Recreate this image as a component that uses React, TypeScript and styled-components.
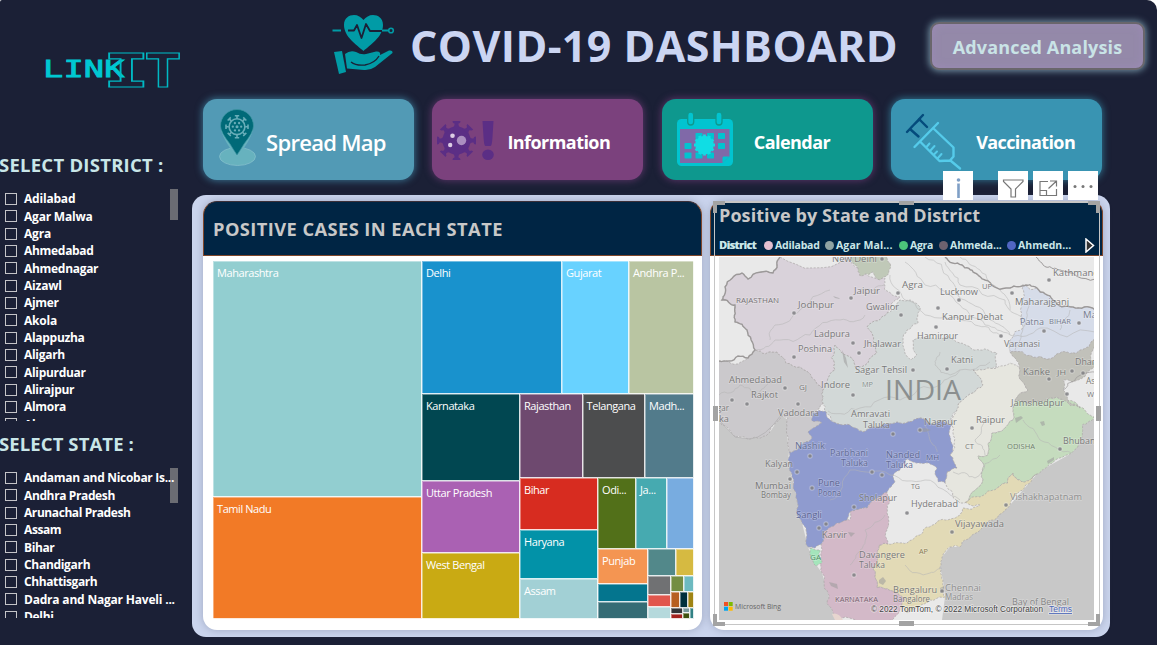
import React from 'react';
import styled, { createGlobalStyle } from 'styled-components';

const Global = createGlobalStyle`
  *, *::before, *::after { box-sizing: border-box; }
  html, body { margin: 0; padding: 0; background: #ffffff; overflow: hidden; }
  body { font-family: "Open Sans", "Noto Sans", sans-serif; }
`;

const Page = styled.div`
  width: 1157px;
  height: 645px;
  display: flex;
  background: #1b2036;
  border-radius: 2px 10px 0 0;
  overflow: hidden;
`;

/* ---------- sidebar ---------- */

const Sidebar = styled.aside`
  width: 192px;
  height: 645px;
  flex: none;
  display: flex;
  flex-direction: column;
  overflow: hidden;
`;

const LogoBox = styled.div`
  height: 153px;
  padding: 48px 0 0 42px;
  flex: none;
`;

const SideTitle = styled.h2<{ $track: number }>`
  margin: 0 0 0 -1px;
  height: 24px;
  flex: none;
  font-size: 18.5px;
  line-height: 24px;
  font-weight: 700;
  color: #c9e6e8;
  white-space: nowrap;
  letter-spacing: ${(p) => p.$track}px;
`;

const SlicerBox = styled.div<{ $top: number; $height: number; $gap: number }>`
  margin-top: ${(p) => p.$top}px;
  margin-bottom: ${(p) => p.$gap}px;
  height: ${(p) => p.$height}px;
  width: 178px;
  flex: none;
  display: flex;
  justify-content: space-between;
  overflow: hidden;
  padding-left: 5px;
`;

const Options = styled.ul`
  position: relative;
  z-index: 1;
  list-style: none;
  margin: 0;
  padding: 1.3px 0 0;
  width: 165px;
  flex: none;
`;

const Option = styled.li`
  display: flex;
  align-items: center;
  gap: 7px;
  height: 17.33px;
  white-space: nowrap;
  font-size: 12px;
  line-height: 17px;
  font-weight: 700;
  color: #ffffff;
`;

const Check = styled.span`
  width: 12px;
  height: 12px;
  flex: none;
  border: 1px solid #c4c4c8;
`;

const OptionText = styled.span<{ $track: number }>`
  letter-spacing: ${(p) => p.$track}px;
`;

const Thumb = styled.div<{ $height: number }>`
  width: 8px;
  flex: none;
  height: ${(p) => p.$height}px;
  background: #6b6c73;
`;

/* ---------- main column ---------- */

const Main = styled.main`
  width: 965px;
  display: flex;
  flex-direction: column;
`;

const Header = styled.header`
  height: 99px;
  display: flex;
  align-items: flex-start;
  padding-left: 138px;
`;

const HeartBox = styled.div`
  width: 80px;
  padding-top: 12px;
  flex: none;
`;

const Title = styled.h1`
  margin: 0;
  padding-top: 17px;
  width: 520px;
  flex: none;
  font-size: 43px;
  line-height: 58px;
  font-weight: 700;
  letter-spacing: 0.4px;
  color: #cbd5f2;
  white-space: nowrap;
`;

const Advanced = styled.button`
  margin: 22px 0 0 0;
  width: 215px;
  height: 48px;
  flex: none;
  padding: 2px 0 0 0;
  border: 2px solid #69666c;
  border-radius: 9px;
  background: #9489a9;
  box-shadow: 0 0 7px 1px rgba(150, 190, 205, 0.75), inset 0 0 8px rgba(160, 140, 190, 0.7);
  font: 700 18px/42px "Open Sans", "Noto Sans", sans-serif;
  letter-spacing: 0.15px;
  color: #c9e3e6;
  white-space: nowrap;
`;

const Nav = styled.nav`
  height: 81px;
  padding-left: 11px;
  display: flex;
  gap: 18.4px;
`;

const NavCard = styled.button<{ $bg: string; $glow: string }>`
  width: 211px;
  height: 81px;
  flex: none;
  display: flex;
  align-items: center;
  margin: 0;
  padding: 0;
  border: 0;
  border-radius: 14px;
  text-align: left;
  background: ${(p) => p.$bg};
  box-shadow: 0 0 7px 1px ${(p) => p.$glow};
`;

const NavIcon = styled.span<{ $width: number }>`
  width: ${(p) => p.$width}px;
  height: 81px;
  flex: none;
  display: block;
`;

const NavLabel = styled.span<{ $size: number; $weight: number; $track: number }>`
  padding-top: 5px;
  font-family: "Open Sans", "Noto Sans", sans-serif;
  font-size: ${(p) => p.$size}px;
  line-height: 28px;
  font-weight: ${(p) => p.$weight};
  letter-spacing: ${(p) => p.$track}px;
  color: #ffffff;
  white-space: nowrap;
`;

const Board = styled.section`
  margin-top: 15px;
  width: 918px;
  height: 442px;
  padding: 6px 7px 7px 11px;
  display: flex;
  gap: 8px;
  border-radius: 14px;
  background: #cbd5ee;
`;

const Panel = styled.article<{ $width: number }>`
  position: relative;
  width: ${(p) => p.$width}px;
  height: 429px;
  flex: none;
  display: flex;
  flex-direction: column;
  border-radius: 14px;
  background: #ffffff;
  box-shadow: 0 0 8px rgba(120, 130, 155, 0.55);
`;

const PanelHead = styled.div`
  height: 55px;
  flex: none;
  padding-left: 9px;
  display: flex;
  align-items: center;
  border: 1px solid #80472b;
  border-top-color: #3b2f38;
  border-radius: 14px 14px 0 0;
  background: #002544;
  color: #c8c8c8;
  font-size: 18.3px;
  font-weight: 700;
  letter-spacing: 0.42px;
  white-space: nowrap;
`;

/* ---------- treemap ---------- */

const TreeBox = styled.div`
  margin: 5px 0 0 10px;
  width: 482px;
  height: 359px;
  display: flex;
`;

const Split = styled.div<{ $dir: 'row' | 'column'; $size: number }>`
  display: flex;
  flex-direction: ${(p) => p.$dir};
  flex: 0 0 ${(p) => p.$size}px;
  min-width: 0;
  min-height: 0;
`;

const Cell = styled.div<{ $size: number; $color: string }>`
  flex: 0 0 ${(p) => p.$size}px;
  min-width: 0;
  min-height: 0;
  overflow: hidden;
  padding: 3px 0 0 4px;
  background: ${(p) => p.$color};
  box-shadow: inset -1px -1px 0 rgba(255, 255, 255, 0.85), inset 1px 1px 0 rgba(255, 255, 255, 0.4);
  font-size: 11px;
  line-height: 18px;
  letter-spacing: -0.42px;
  color: #ffffff;
  white-space: nowrap;
`;

type Leaf = { s: number; c: string; t?: string };
type Branch = { s: number; d: 'row' | 'column'; k: Tree[] };
type Tree = Leaf | Branch;

const tree: Branch = {
  s: 482, d: 'row', k: [
    { s: 209, d: 'column', k: [{ s: 236, c: '#92ced0', t: 'Maharashtra' }, { s: 122, c: '#f27a26', t: 'Tamil Nadu' }] },
    { s: 272, d: 'column', k: [
      { s: 133, d: 'row', k: [{ s: 140, c: '#1992cd', t: 'Delhi' }, { s: 67, c: '#68d2ff', t: 'Gujarat' }, { s: 65, c: '#b9c5a2', t: 'Andhra P...' }] },
      { s: 225, d: 'row', k: [
        { s: 98, d: 'column', k: [{ s: 87, c: '#014751', t: 'Karnataka' }, { s: 72, c: '#aa61b3', t: 'Uttar Pradesh' }, { s: 66, c: '#c9aa13', t: 'West Bengal' }] },
        { s: 174, d: 'column', k: [
          { s: 84, d: 'row', k: [{ s: 62.5, c: '#6e496f', t: 'Rajasthan' }, { s: 62.5, c: '#4c4d4e', t: 'Telangana' }, { s: 49, c: '#527b8b', t: 'Madh...' }] },
          { s: 141, d: 'row', k: [
            { s: 78, d: 'column', k: [{ s: 52, c: '#d72c20', t: 'Bihar' }, { s: 49, c: '#0292a8', t: 'Haryana' }, { s: 40, c: '#a2d0d5', t: 'Assam' }] },
            { s: 96, d: 'column', k: [
              { s: 71, d: 'row', k: [{ s: 38, c: '#527019', t: 'Odi...' }, { s: 31, c: '#46aab0', t: 'Ja...' }, { s: 27, c: '#78ace0' }] },
              { s: 70, d: 'row', k: [
                { s: 50, d: 'column', k: [{ s: 35, c: '#f49552', t: 'Punjab' }, { s: 18, c: '#04758e' }, { s: 17, c: '#356c75' }] },
                { s: 46, d: 'column', k: [
                  { s: 27, d: 'row', k: [{ s: 28, c: '#52888a' }, { s: 18, c: '#d6ba41' }] },
                  { s: 43, d: 'row', k: [
                    { s: 23, d: 'column', k: [{ s: 19, c: '#707173' }, { s: 12, c: '#e1564d' }, { s: 12, c: '#b5d9dc' }] },
                    { s: 23, d: 'column', k: [
                      { s: 16, d: 'row', k: [{ s: 13, c: '#748d42' }, { s: 10, c: '#6dbac0' }] },
                      { s: 16, d: 'row', k: [{ s: 9, c: '#b75f20' }, { s: 8, c: '#00303b' }, { s: 6, c: '#9f8414' }] },
                      { s: 11, d: 'row', k: [
                        { s: 12, d: 'column', k: [{ s: 6, c: '#333538' }, { s: 5, c: '#a2211d' }] },
                        { s: 7, d: 'column', k: [{ s: 5, c: '#77989b' }, { s: 6, c: '#3f5210' }] },
                        { s: 4, c: '#318184' },
                      ] },
                    ] },
                  ] },
                ] },
              ] },
            ] },
          ] },
        ] },
      ] },
    ] },
  ],
};

const TreeNode = ({ n }: { n: Tree }) =>
  'k' in n ? (
    <Split $dir={n.d} $size={n.s}>
      {n.k.map((child, i) => <TreeNode key={i} n={child} />)}
    </Split>
  ) : (
    <Cell $size={n.s} $color={n.c}>{n.t}</Cell>
  );

/* ---------- map panel ---------- */

const MapHead = styled.div`
  height: 55px;
  flex: none;
  padding: 2px 0 0 8px;
  border: 1px solid #80472b;
  border-top-color: #3b2f38;
  border-radius: 12px 12px 0 0;
  background: #002544;
`;

const MapTitle = styled.h3`
  margin: 0;
  height: 22px;
  font-size: 18px;
  line-height: 22px;
  font-weight: 700;
  letter-spacing: 0.08px;
  color: #c8c8c8;
  white-space: nowrap;
`;

const Legend = styled.div`
  display: flex;
  align-items: center;
  height: 18px;
  margin-top: 10px;
  font-size: 10.5px;
  line-height: 18px;
  font-weight: 700;
  color: #cbe7e8;
  white-space: nowrap;
`;

const LegendName = styled.span<{ $width: number; $track: number; $heavy?: boolean }>`
  width: ${(p) => p.$width}px;
  flex: none;
  letter-spacing: ${(p) => p.$track}px;
  text-shadow: ${(p) => (p.$heavy ? '0.6px 0 0 #cbe7e8' : 'none')};
`;

const Dot = styled.i<{ $color: string }>`
  width: 9px;
  height: 9px;
  flex: none;
  margin-right: 2px;
  border-radius: 50%;
  background: ${(p) => p.$color};
`;

const MapBox = styled.div`
  margin: 1px 0 0 9px;
  width: 375px;
  height: 363px;
  line-height: 0;
`;

const Frame = styled.div`
  position: absolute;
  left: 4px;
  top: 0;
  width: 386px;
  height: 424px;
  border: solid #c6c6c6;
  border-width: 2px 1px 1px 1px;
  pointer-events: none;
`;

const Handle = styled.i<{ $x: number; $y: number; $w: number; $h: number; $edge?: string }>`
  position: absolute;
  left: ${(p) => p.$x}px;
  top: ${(p) => p.$y}px;
  width: ${(p) => p.$w}px;
  height: ${(p) => p.$h}px;
  border-style: solid;
  border-color: #a3a3a3;
  border-width: ${(p) => p.$edge ?? '0'};
  background: ${(p) => (p.$edge ? 'transparent' : '#a3a3a3')};
`;

const Tools = styled.div`
  position: absolute;
  left: 233px;
  top: -30px;
  display: flex;
  gap: 5px;
`;

const Tool = styled.span<{ $after?: number }>`
  width: 30px;
  height: 29px;
  margin-right: ${(p) => p.$after ?? 0}px;
  background: #ffffff;
  line-height: 0;
`;

type P = [number, number];

/* fractal edge: the same pair of points always gives the same wiggle */
const rough = (a: P, b: P, depth: number): P[] => {
  const len = Math.hypot(b[0] - a[0], b[1] - a[1]);
  if (depth === 0 || len < 3) return [b];
  const flip = a[0] > b[0] || (a[0] === b[0] && a[1] > b[1]);
  const [p, q] = flip ? [b, a] : [a, b];
  const h = Math.sin(p[0] * 12.98 + p[1] * 78.23 + q[0] * 37.7 + q[1] * 11.3) * 43758.54;
  const k = (h - Math.floor(h) - 0.5) * 0.34;
  const m: P = [(p[0] + q[0]) / 2 - (q[1] - p[1]) * k, (p[1] + q[1]) / 2 + (q[0] - p[0]) * k];
  return [...rough(a, m, depth - 1), ...rough(m, b, depth - 1)];
};

const toPath = (s: string, close = true, depth = 3) => {
  const pts = s.trim().split(/\s+/).map((t) => t.split(',').map(Number) as P);
  let out: P[] = [pts[0]];
  for (let i = 1; i < pts.length; i++) out = out.concat(rough(pts[i - 1], pts[i], depth));
  if (close) out = out.concat(rough(pts[pts.length - 1], pts[0], depth));
  return 'M' + out.map((p) => p[0].toFixed(1) + ' ' + p[1].toFixed(1)).join('L') + (close ? 'Z' : '');
};

const regions: { c: string; p: string }[] = [
  { c: '#cbc9cc', p: '755,350 777,352 800,367 823,390 823,403 813,413 822,423 812,438 797,450 789,452 787,434 788,418 781,416 770,432 750,439 735,437 719,420 719,361 748,358' },
  { c: '#d9d2da', p: '780,257 847,257 860,270 885,278 885,290 900,297 887,313 867,327 876,345 877,353 857,370 850,357 835,345 835,370 823,390 800,367 777,352 755,350 747,330 735,322 735,305 722,300 725,287 742,273 748,279 773,273' },
  { c: '#c0c9b8', p: '850,257 887,257 889,270 880,280 873,272 860,276 857,266' },
  { c: '#d2d8d7', p: '867,327 887,313 900,300 912,301 920,307 918,323 907,330 903,340 906,355 911,360 917,355 913,340 933,338 960,343 980,350 997,353 997,367 973,370 983,385 963,400 957,410 952,424 937,423 920,418 897,422 880,427 863,432 850,425 833,422 825,411 823,403 823,390 835,370 835,345 850,357 857,370 877,353 876,345' },
  { c: '#e6e6df', p: '973,370 997,368 1010,363 1020,370 1028,390 1015,400 1013,408 1013,420 992,433 988,455 978,456 984,466 983,480 968,502 960,503 947,487 945,483 947,472 957,468 950,455 953,433 952,425 957,410 963,400 983,385' },
  { c: '#c5dcbe', p: '1013,408 1015,400 1028,404 1050,398 1063,400 1083,408 1094,417 1082,425 1082,440 1072,453 1047,467 1037,474 1023,482 1013,473 997,488 968,502 983,480 984,466 978,456 988,455 992,433 1013,420' },
  { c: '#c1c1ba', p: '1010,352 1033,357 1060,353 1080,350 1095,339 1095,367 1063,380 1063,390 1080,408 1063,400 1050,398 1028,404 1015,400 1028,390 1020,370' },
  { c: '#d6dce9', p: '1022,285 1037,288 1053,300 1073,307 1095,310 1095,339 1080,350 1060,353 1033,357 1010,352 1010,340 1023,327 1023,300' },
  { c: '#e2dab6', p: '879,545 888,544 907,543 920,535 940,520 960,515 963,508 980,505 965,502 980,497 997,488 1013,473 1023,482 1037,474 1023,490 1010,505 987,522 982,528 962,542 960,547 950,547 942,557 940,567 943,580 945,597 930,600 917,607 907,613 900,605 893,591 877,588 873,567 878,557' },
  { c: '#d3b9c8', p: '823,532 850,520 850,512 867,508 887,492 891,500 887,513 887,530 888,544 879,545 878,557 873,567 877,588 893,591 905,600 900,607 892,620 838,620 833,613 828,593 822,573 820,560 822,543' },
  { c: '#8f9bcf', p: '789,452 797,450 812,438 808,432 822,423 812,421 813,413 825,411 827,417 833,422 850,425 863,432 880,427 897,422 920,418 937,423 952,425 949,433 953,447 950,455 957,468 947,472 945,483 938,482 937,468 920,463 907,459 900,470 893,477 895,482 887,492 867,508 850,512 847,520 837,523 823,532 822,543 815,548 808,547 802,523 797,500 792,477 788,460' },
  { c: '#a4e5bb', p: '810,548 820,550 822,563 816,566 811,557' },
];

const coastWest = 'M719 420L735 437L750 439L770 432L781 415L788 420L787 434L789 452L788 460L792 477L797 500L802 523L808 547L812 557L817 566L822 573L828 593L833 613L838 620L719 620Z';
const coastEast = 'M1095 418L1082 425L1082 440L1072 453L1047 467L1037 474L1023 490L1010 505L987 522L982 528L962 542L960 547L950 547L942 557L940 567L943 580L945 597L942 620L1095 620Z';

const rivers = [
  '905,262 925,285 960,305 985,325 1010,335 1040,328 1095,332',
  '925,257 950,280 965,300 990,320 1010,335',
  '890,275 905,300 940,318 975,325 1000,335',
  '945,262 960,285 1005,300 1023,318',
  '770,340 775,325 800,310 830,290',
  '755,350 775,340 810,335 840,320 865,315',
  '828,411 860,408 900,400 940,385 960,370',
  '830,500 850,470 890,475 925,480 960,500',
  '850,565 860,550 865,530 885,515',
  '905,565 930,573 942,568', '940,352 935,365 950,375 990,362',
  '953,472 975,478 1000,455', '1023,420 1040,440 1072,453', '1015,350 1025,325 1030,300',
  '1060,330 1070,310', '719,395 740,385 757,395 770,380', '960,257 980,270 1000,290 1010,310',
  '925,425 930,440 937,452', '860,290 885,285', '985,420 975,440 985,455',
];

type Label = [string, number, number, number, number, string?];
/* text, x, baseline y, width, size, colour */
const labels: Label[] = [
  ['New Delhi', 832, 262, 45, 9.5],
  ['RAJASTHAN', 736, 303, 43, 8, '#757175'],
  ['Jodhpur', 798, 308, 36, 9.5], ['Jaipur', 854, 294, 26, 9.5], ['Agra', 902, 288, 21, 9.5],
  ['Gwalior', 866, 310, 33, 9.5], ['Ladpura', 814, 337, 36, 9.5], ['Jhalawar', 864, 347, 37, 9.5],
  ['Poshina', 798, 352, 34, 9.5], ['Sagar Tehsil', 855, 373, 52, 9.5], ['Ahmedabad', 729, 383, 53, 9.5],
  ['Rajkot', 751, 398, 27, 9.5], ['GJ', 799, 390, 8, 8], ['Indore', 821, 388, 29, 9.5],
  ['MP', 862, 387, 11, 8, '#868f8f'], ['Vadodara', 778, 416, 41, 9.5], ['gar', 717, 411, 12, 9.5], ['ka', 719, 422, 10, 9.5],
  ['Lucknow', 940, 295, 38, 9.5], ['UP', 982, 289, 10, 8], ['Kathmandu', 1053, 276, 52, 9.5],
  ['Maharajganj', 1015, 305, 54, 9.5], ['Kanpur Dehat', 942, 320, 61, 9.5], ['Patna', 1020, 325, 24, 9.5, '#777d8e'],
  ['BIHAR', 1049, 324, 22, 8, '#777d8e'], ['Malda', 1083, 318, 27, 9.5, '#777d8e'], ['Hamirpur', 917, 339, 41, 9.5],
  ['Varanasi', 1004, 347, 36, 9.5], ['Katni', 951, 363, 22, 9.5], ['Dhanbad', 1075, 365, 38, 9.5],
  ['Kanke', 1023, 375, 27, 9.5], ['JH', 1057, 375, 9, 8], ['Asansol', 1086, 384, 30, 9.5], ['WB', 1087, 397, 12, 8],
  ['Jamshedpur', 1011, 406, 53, 9.5], ['Amravati', 851, 417, 39, 9.5], ['Taluka', 863, 428, 27, 9.5],
  ['Nagpur', 924, 425, 33, 9.5], ['Raipur', 976, 423, 29, 9.5], ['CT', 965, 449, 9, 8],
  ['ODISHA', 1007, 449, 28, 8, '#6f7f6b'], ['Bhubaneswar', 1063, 444, 57, 9.5],
  ['Nashik', 795, 449, 30, 9.5, '#666f92'], ['Kalyan', 765, 467, 28, 9.5], ['Parbhani', 830, 456, 38, 9.5, '#5f6994'],
  ['Taluka', 841, 466, 27, 9.5, '#5f6994'], ['Nanded', 886, 458, 34, 9.5, '#5f6994'], ['Taluka', 886, 468, 27, 9.5, '#5f6994'],
  ['MH', 926, 460, 13, 8, '#596290'], ['Mumbai', 755, 489, 36, 9.5], ['Bombay', 761, 498, 30, 8.5],
  ['Pune', 818, 486, 22, 9.5, '#5b6592'], ['Poona', 818, 496, 23, 8.5, '#5b6592'], ['Sholapur', 859, 501, 38, 9.5],
  ['Sangli', 796, 518, 26, 9.5, '#5b6592'], ['Karvir', 822, 538, 25, 9.5], ['TG', 911, 489, 9, 8],
  ['Hyderabad', 911, 507, 47, 9.5], ['Vishakhapatnam', 1010, 500, 72, 9.5, '#8f8f8f'], ['Vijayawada', 955, 527, 49, 9.5],
  ['GA', 810, 560, 11, 8, '#4f8f66'], ['Davangere', 859, 558, 46, 9.5], ['Taluka', 859, 568, 26, 9.5],
  ['AP', 919, 554, 9, 8, '#887a52'], ['Bengaluru', 893, 593, 44, 9.5], ['Bangalore', 893, 602, 37, 8.5],
  ['KARNATAKA', 835, 602, 43, 8, '#765f6d'], ['Chennai', 945, 591, 36, 9.5, '#8f8f8f'], ['Madras', 945, 600, 28, 8.5, '#8f8f8f'],
  ['Bay of Bengal', 1012, 605, 57, 9.5, '#868686'],
];

const towns: P[] = [
  [882, 259], [898, 293], [851, 298], [794, 313], [901, 315], [853, 343], [859, 353], [794, 357], [913, 370],
  [785, 388], [747, 404], [732, 400], [798, 404], [853, 395], [959, 300], [1012, 293], [1049, 280], [938, 308],
  [936, 327], [1044, 331], [1079, 323], [1001, 336], [947, 369], [1072, 371], [1083, 373], [1049, 379], [1067, 394],
  [893, 434], [920, 430], [972, 428], [1060, 449], [810, 456], [797, 472], [790, 479], [812, 488], [872, 472],
  [882, 475], [854, 507], [826, 524], [819, 528], [907, 513], [1006, 505], [952, 532], [854, 575], [942, 591],
];

const IndiaMap = () => (
  <svg width="375" height="363" viewBox="719 257 375 363" fontFamily='"Open Sans", "Noto Sans", sans-serif'>
    <rect x="719" y="257" width="376" height="363" fill="#e9e9e9" />
    <path d={coastWest} fill="#c8c8c8" />
    <path d={coastEast} fill="#c8c8c8" />
    {regions.map((r) => (
      <path key={r.c} d={toPath(r.p)} fill={r.c} stroke="#aaa6a6" strokeWidth="0.7" strokeDasharray="2.2 1.4" />
    ))}
    <path d="M832 614Q838 612 843 620L835 620Z" fill="#e7d5cf" />
    <g fill="none" stroke="#b5b5b5" strokeWidth="0.7" opacity="0.75">
      {rivers.map((r) => <path key={r} d={toPath(r, false)} />)}
    </g>
    <g fill="none" stroke="#9c9999" strokeWidth="1.4">
      <path d={toPath('780,257 773,273 748,279 742,273 725,287 722,300 735,305 735,322 747,330 755,350 748,358 738,356 719,361', false)} />
      <path d={toPath('945,257 962,265 975,273 985,280 1006,288 1022,286 1037,288 1053,300 1073,307 1095,310', false)} />
      <path d={toPath('1036,257 1046,267 1060,270 1095,279', false)} strokeWidth="1" />
      <path d="M719 420L735 437L750 439Q765 438 781 415" stroke="#b3b1b3" strokeWidth="0.8" />
      <path d={toPath('1063,390 1075,380 1095,372', false)} strokeWidth="0.7" />
    </g>
    <g fill="#9a9a9a" opacity="0.55">
      <path d="M833 296l6 2 1 1-5-1zM842 350l4 8 2 10-4-6zM1015 418l6-2 2 2-7 5zM1040 422l4-1 1 4-3 1zM1047 461l7-4v3l-6 4zM848 532l7 1-4 4zM829 582l8 2 1 5-7-3zM879 580l4-3 3 4-3 4-4-2zM940 588l4-2v7h-4zM916 431l8-3 7 2-6 2z" />
    </g>
    {towns.map(([x, y]) => (
      <circle key={x + '-' + y} cx={x} cy={y} r="2.1" fill="#808084" fillOpacity="0.85" stroke="#f0f0f0" strokeOpacity="0.35" strokeWidth="1.2" />
    ))}
    {labels.map(([t, x, y, w, s, c]) => (
      <text key={t + x + y} x={x} y={y} textLength={w} lengthAdjust="spacingAndGlyphs" fontSize={s} fill={c ?? '#797979'}
        stroke="#ffffff" strokeOpacity="0.25" strokeWidth="1.4" paintOrder="stroke">{t}</text>
    ))}
    <text x="885" y="400" textLength="76" lengthAdjust="spacingAndGlyphs" fontSize="28" fill="#8b8f8f">INDIA</text>
    <g>
      <rect x="724" y="602" width="4" height="4" fill="#f25022" /><rect x="728.7" y="602" width="4" height="4" fill="#7fba00" />
      <rect x="724" y="606.7" width="4" height="4" fill="#00a4ef" /><rect x="728.7" y="606.7" width="4" height="4" fill="#ffb900" />
      <text x="735" y="609" textLength="46" lengthAdjust="spacingAndGlyphs" fontSize="8" fill="#666">Microsoft Bing</text>
    </g>
    <g fontFamily='"Liberation Sans", sans-serif' fontSize="8.5" fill="#444" stroke="#fff" strokeOpacity="0.5" strokeWidth="1.5" paintOrder="stroke">
      <text x="871" y="612" textLength="172" lengthAdjust="spacingAndGlyphs">© 2022 TomTom, © 2022 Microsoft Corporation</text>
      <text x="1049" y="612" textLength="23" lengthAdjust="spacingAndGlyphs" fill="#4b66b8" textDecoration="underline">Terms</text>
    </g>
  </svg>
);

/* ---------- drawings ---------- */

const Logo = () => (
  <svg width="142" height="44" viewBox="42 48 142 44" fontFamily='"DejaVu Sans Mono", monospace' fontWeight="700">
    <g transform="translate(43 77) scale(1.43 1)">
      <text x="0" y="0" fontSize="23.5" fontWeight="400" fill="#00c8d2" stroke="#00c8d2" strokeWidth="0.8" textLength="57">LINK</text>
    </g>
    <g fill="none" stroke="#00b9c4" strokeWidth="1.1">
      <g transform="translate(102.500 86.500) scale(1.68 1)"><text x="0" y="0" fontSize="47">I</text></g>
      <g transform="translate(144 86.500) scale(1.34 1)"><text x="0" y="0" fontSize="47">T</text></g>
    </g>
  </svg>
);

const HeartHand = () => (
  <svg width="66" height="66" viewBox="330 12 66 66">
    <path d="M363.500 51C357 45 344 37 344 25C344 18 349 15 354 15C358 15 361 17 363.500 20C366 17 369 15 373 15C378 15 383 18 383 25C383 37 370 45 363.500 51Z" fill="#019ba6" />
    <path d="M348 30.500H354L357 25L361.500 38L366 24L370 31H382" fill="none" stroke="#1b2036" strokeWidth="1.8" strokeLinejoin="round" />
    <path d="M332.500 30.500H341M382 30.500H388" stroke="#019ba6" strokeWidth="2" />
    <circle cx="391" cy="30.500" r="2.300" fill="none" stroke="#019ba6" strokeWidth="1.600" />
    <path d="M334 52L342 51L346 72L339 74Z" fill="#019ba6" />
    <path d="M345 54Q350 50 356 52Q361 55 366 54L376 51.500Q381 51 380 55L389 50.500Q393 50 392.500 53L375 67Q370 70.500 364 70L347 68.500Z" fill="#019ba6" />
    <path d="M351 62Q356 66 365 65Q375 63 379 56" fill="none" stroke="#1b2036" strokeWidth="1.300" />
  </svg>
);

const spikes = (n: number) => Array.from({ length: n }, (_, i) => (360 / n) * i);

const PinIcon = () => (
  <svg width="60" height="81" viewBox="203 99 60 81">
    <ellipse cx="237.500" cy="156.500" rx="18" ry="9" fill="#67b2be" stroke="#8ac3cf" strokeWidth="0.700" />
    <path d="M237 159Q232 153 230 148Q221 135 220.500 126A16.500 16.500 0 0 1 253.500 126Q253 135 244 148Q242 153 237 159Z" fill="#67b2be" />
    <path d="M237 155Q233 149 230 144Q220.500 132 220.500 126A16.500 16.500 0 0 1 253.500 126Q253.500 132 244 144Q241 149 237 155Z" fill="#006a78" stroke="#3c93a2" strokeWidth="0.700" />
    <g stroke="#68aeb9" strokeWidth="1.600" fill="none">
      <circle cx="237" cy="126.700" r="7.900" />
      {spikes(8).map((a) => <path key={a} d="M237 118.500V116M234.800 115.700H239.200" transform={`rotate(${a} 237 126.700)`} />)}
    </g>
    <g fill="#68aeb9">
      <circle cx="237" cy="126.700" r="1.500" />
      {spikes(6).map((a) => <circle key={a} cx="237" cy="122.500" r="1.150" transform={`rotate(${a + 30} 237 126.700)`} />)}
    </g>
  </svg>
);

const VirusIcon = () => (
  <svg width="70" height="81" viewBox="433 99 70 81">
    <g fill="#5b2e85">
      <circle cx="457.500" cy="140.500" r="14" />
      {spikes(8).map((a) => (
        <path key={a} d="M454 128L455.500 125V123.500Q453.500 123.500 453.500 121H461.500Q461.500 123.500 459.500 123.500V125L461 128Z" transform={`rotate(${a} 457.500 140.500)`} />
      ))}
      <path d="M483.500 121H494.500L493.500 137Q493 146 491.500 146H486.500Q485 146 484.500 137Z" />
      <ellipse cx="489" cy="154.800" rx="5.800" ry="5.200" />
    </g>
    <circle cx="462.500" cy="140.500" r="4.700" fill="#ab8fc0" />
    <circle cx="453.500" cy="135.800" r="2.300" fill="#dccce4" />
    <circle cx="451.200" cy="145" r="2.200" fill="#dccce4" />
  </svg>
);

const calCells: P[] = [[695.5, 133], [707, 133], [718, 133], [684.500, 143], [718, 143], [684.500, 152.500], [695.500, 152.500], [707, 152.500]];

const CalendarIcon = () => (
  <svg width="71" height="81" viewBox="662 99 71 81">
    <rect x="677" y="119" width="56" height="47" rx="4.500" fill="#02c4d0" />
    <path d="M680 129H729.500V156.500L722.500 163H680Z" fill="#8069a8" />
    <path d="M722.500 163L729.500 156.500H723.500Q722.500 156.500 722.500 158Z" fill="#02c4d0" />
    {[690.700, 719].map((x) => <rect key={x} x={x - 3} y="112" width="6" height="13" rx="3" fill="#02c4d0" stroke="#0e988e" strokeWidth="1.300" />)}
    {calCells.map(([x, y]) => <rect key={x + '-' + y} x={x} y={y} width="7" height="6" rx="0.800" fill="#02c4d0" />)}
    <g fill="#10dde4">
      <circle cx="704.500" cy="145" r="9.300" />
      {spikes(12).map((a) => <path key={a} d="M703.300 137L703 134.500H706L705.700 137Z" transform={`rotate(${a} 704.500 145)`} />)}
    </g>
  </svg>
);

const SyringeIcon = () => (
  <svg width="80" height="81" viewBox="891 99 80 81" fill="none" strokeLinecap="round" strokeLinejoin="round" strokeWidth="2.400">
    <g stroke="#044b7c"><path d="M907 132L923 115M910 129L918.500 136.500M919 119L927 127M911.500 127L920 119" /></g>
    <g stroke="#55cbea">
      <path d="M914.500 147L938 123M920 141.500L939.500 161L950 160.500L953.500 156.500V147.500L933 128M951 161L960 168.500" />
      <path d="M926.500 147L929.500 143.500M930 151L934.500 146M934 154.500L937 151.500M937.500 158.500L941.500 154" strokeWidth="2" />
    </g>
  </svg>
);

/* ---------- data ---------- */

const districts: [string, number][] = [
  ['Adilabad', -0.2], ['Agar Malwa', -0.2], ['Agra', -0.2], ['Ahmedabad', -0.3], ['Ahmednagar', -0.3], ['Aizawl', -0.2],
  ['Ajmer', -0.3], ['Akola', -0.2], ['Alappuzha', -0.3], ['Aligarh', -0.3], ['Alipurduar', -0.3], ['Alirajpur', -0.3],
  ['Almora', -0.3], ['Alwar', -0.3],
];

const states: [string, number][] = [
  ['Andaman and Nicobar Is...', -0.3], ['Andhra Pradesh', -0.38], ['Arunachal Pradesh', -0.42], ['Assam', -0.4], ['Bihar', -0.4],
  ['Chandigarh', -0.3], ['Chhattisgarh', -0.4], ['Dadra and Nagar Haveli ...', -0.2], ['Delhi', -0.3],
];

const legend: [string, string, number, number][] = [
  ['Adilabad', '#e3bfd0', 50, -0.2], ['Agar Mal...', '#8fa3a3', 63, 0.1], ['Agra', '#4cc47a', 29, -0.3],
  ['Ahmeda...', '#6d626f', 57, -0.1], ['Ahmedn...', '#5166c3', 67, 0],
];

type SlicerProps = { items: [string, number][]; top: number; height: number; gap: number; thumb: number };

const Slicer = ({ items, top, height, gap, thumb }: SlicerProps) => (
  <SlicerBox $top={top} $height={height} $gap={gap}>
    <Options>
      {items.map(([name, track]) => (
        <Option key={name}><Check /><OptionText $track={track}>{name}</OptionText></Option>
      ))}
    </Options>
    <Thumb $height={thumb} />
  </SlicerBox>
);

export default function App() {
  return (
    <>
      <Global />
      <Page>
        <Sidebar>
          <LogoBox><Logo /></LogoBox>
          <SideTitle $track={0.25}>SELECT DISTRICT :</SideTitle>
          <Slicer items={districts} top={12} height={232} gap={11} thumb={31} />
          <SideTitle $track={0.1}>SELECT STATE :</SideTitle>
          <Slicer items={states} top={12} height={150} gap={0} thumb={35} />
        </Sidebar>
        <Main>
          <Header>
            <HeartBox><HeartHand /></HeartBox>
            <Title>COVID-19 DASHBOARD</Title>
            <Advanced>Advanced Analysis</Advanced>
          </Header>
          <Nav>
            <NavCard $bg="#529ab5" $glow="rgba(70,150,185,.65)">
              <NavIcon $width={63}><PinIcon /></NavIcon>
              <NavLabel $size={22} $weight={600} $track={-0.7}>Spread Map</NavLabel>
            </NavCard>
            <NavCard $bg="#7b417d" $glow="rgba(125,65,130,.6)">
              <NavIcon $width={75}><VirusIcon /></NavIcon>
              <NavLabel $size={18} $weight={700} $track={-0.55}>Information</NavLabel>
            </NavCard>
            <NavCard $bg="#0e988e" $glow="rgba(125,65,130,.6)">
              <NavIcon $width={92}><CalendarIcon /></NavIcon>
              <NavLabel $size={18} $weight={700} $track={-0.55}>Calendar</NavLabel>
            </NavCard>
            <NavCard $bg="#3994b2" $glow="rgba(57,148,178,.65)">
              <NavIcon $width={85}><SyringeIcon /></NavIcon>
              <NavLabel $size={18} $weight={700} $track={-0.6}>Vaccination</NavLabel>
            </NavCard>
          </Nav>
          <Board>
            <Panel $width={499}>
              <PanelHead>POSITIVE CASES IN EACH STATE</PanelHead>
              <TreeBox><TreeNode n={tree} /></TreeBox>
            </Panel>
            <Panel $width={393}>
              <MapHead>
                <MapTitle>Positive by State and District</MapTitle>
                <Legend>
                  <LegendName $width={45} $track={-0.2} $heavy>District</LegendName>
                  {legend.map(([name, color, width, track]) => (
                    <React.Fragment key={name}>
                      <Dot $color={color} />
                      <LegendName $width={width} $track={track}>{name}</LegendName>
                    </React.Fragment>
                  ))}
                  <svg width="10" height="15" viewBox="0 0 10 15"><path d="M1 1L8.500 7.500L1 14Z" fill="#333" stroke="#fff" strokeWidth="1.500" /></svg>
                </Legend>
              </MapHead>
              <MapBox><IndiaMap /></MapBox>
              <Frame />
              <Handle $x={3} $y={0} $w={12} $h={12} $edge="4px 0 0 4px" />
              <Handle $x={378} $y={0} $w={12} $h={12} $edge="4px 4px 0 0" />
              <Handle $x={3} $y={413} $w={12} $h={12} $edge="0 0 4px 4px" />
              <Handle $x={378} $y={413} $w={12} $h={12} $edge="0 4px 4px 0" />
              <Handle $x={189} $y={0} $w={15} $h={4} />
              <Handle $x={189} $y={420} $w={15} $h={5} />
              <Handle $x={3} $y={205} $w={5} $h={15} />
              <Handle $x={386} $y={205} $w={5} $h={15} />
              <Tools>
                <Tool $after={20}>
                  <svg width="30" height="29" viewBox="0 0 30 29"><circle cx="15.500" cy="9" r="1.800" fill="#7f9fc6" /><path d="M15.500 12.500V27" stroke="#7f9fc6" strokeWidth="2.600" /></svg>
                </Tool>
                <Tool>
                  <svg width="30" height="29" viewBox="0 0 30 29"><path d="M5.500 9H25V10.500L17.500 18V26H13V18L5.500 10.500Z" fill="none" stroke="#777" strokeWidth="1.200" /></svg>
                </Tool>
                <Tool>
                  <svg width="30" height="29" viewBox="0 0 30 29" fill="none" stroke="#777" strokeWidth="1.200"><path d="M15 10.500H7V24.500H23.500V18M7 19.500H13.500V24.500M17 10H23.500V15.500M23.500 10L15.500 17.500" /></svg>
                </Tool>
                <Tool>
                  <svg width="30" height="29" viewBox="0 0 30 29" fill="#777"><circle cx="7" cy="15.500" r="1.500" /><circle cx="15" cy="15.500" r="1.500" /><circle cx="23" cy="15.500" r="1.500" /></svg>
                </Tool>
              </Tools>
            </Panel>
          </Board>
        </Main>
      </Page>
    </>
  );
}
